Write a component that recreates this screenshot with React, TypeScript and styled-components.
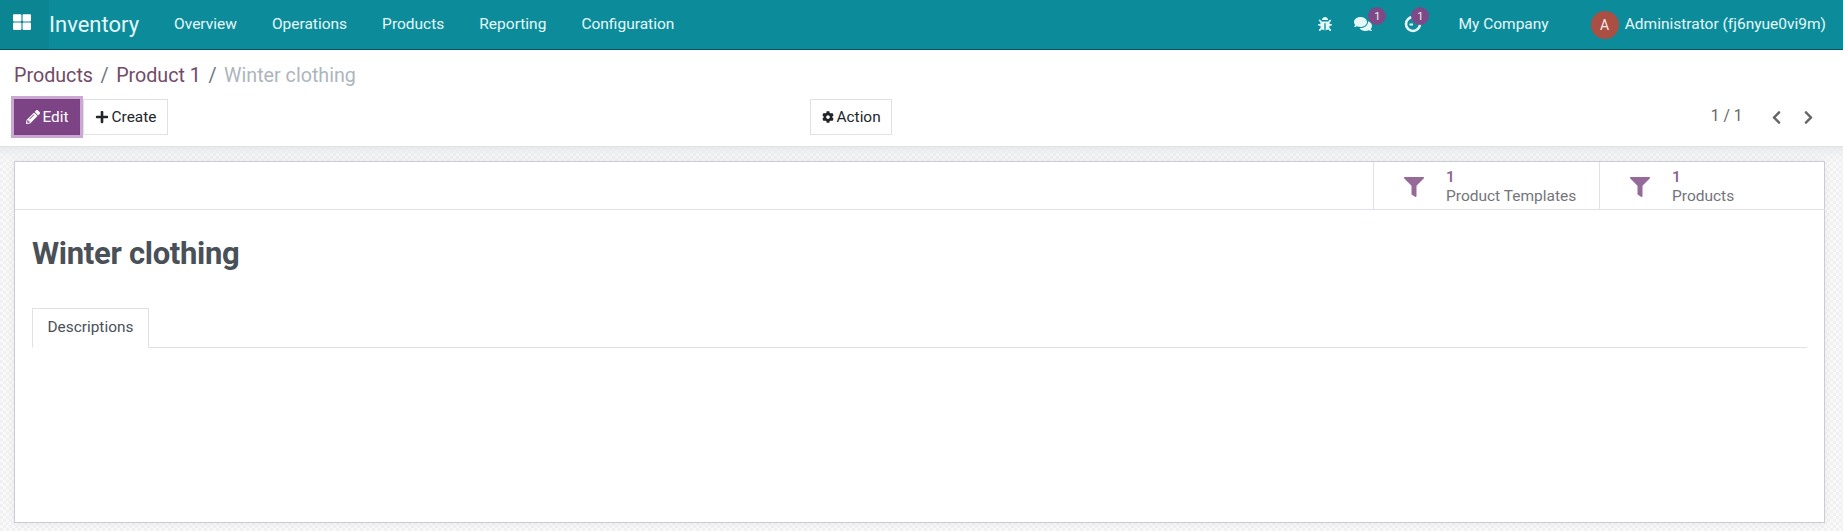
import React from "react";
import styled, { createGlobalStyle } from "styled-components";
import { FaThLarge, FaBug, FaComments, FaPencilAlt, FaPlus, FaCog, FaChevronLeft, FaChevronRight, FaFilter } from "react-icons/fa";

const Global = createGlobalStyle`
  html, body { margin: 0; padding: 0; height: 100%; background: #fff; }
  #root { height: 100%; }
  * { box-sizing: border-box; }
  body { font-family: Roboto, "Liberation Sans", sans-serif; overflow: hidden; }
`;

const Page = styled.div`
  width: 1843px;
  height: 531px;
  display: flex;
  flex-direction: column;
  overflow: hidden;
`;

const NavBar = styled.header`
  height: 50px;
  flex: none;
  background: #0c8c9b;
  border-bottom: 1px solid #06545d;
  display: flex;
  align-items: stretch;
  color: #e6f7f8;
`;

const AppsButton = styled.div`
  width: 49px;
  background: #0b8592;
  display: flex;
  align-items: center;
  justify-content: center;
  padding: 0 5px 6px 0;
  color: #fff;
  font-size: 18px;
`;

const Brand = styled.div`
  font-size: 22px;
  display: flex;
  align-items: center;
  margin-right: 35px;
  padding-bottom: 1px;
`;

const NavMenu = styled.nav`
  display: flex;
  align-items: center;
  gap: 35px;
  font-size: 15.5px;
  padding-bottom: 2px;
`;

const Spacer = styled.div`
  flex: 1;
`;

const Systray = styled.div`
  display: flex;
  align-items: center;
  padding-right: 17px;
  font-size: 15.5px;
`;

const TrayIcon = styled.span<{ $gap: number }>`
  position: relative;
  display: flex;
  margin-right: ${(p) => p.$gap}px;
  font-size: 14px;
  margin-top: -1px;
`;

const Badge = styled.span<{ $left: number }>`
  position: absolute;
  top: -8px;
  left: ${(p) => p.$left}px;
  width: 18px;
  height: 18px;
  border-radius: 50%;
  background: #7d4a87;
  color: #eee;
  font-size: 11px;
  display: flex;
  align-items: center;
  justify-content: center;
`;

const Company = styled.span`
  margin-right: 42px;
  padding-bottom: 2px;
`;

const Avatar = styled.span`
  width: 28px;
  height: 28px;
  border-radius: 50%;
  background: #a94f44;
  color: #fbe9e7;
  display: flex;
  align-items: center;
  justify-content: center;
  font-size: 14px;
  margin-right: 6px;
  margin-top: 1px;
`;

const UserName = styled.span`
  padding-bottom: 2px;
`;

const ControlPanel = styled.section`
  height: 97px;
  flex: none;
  background: #fff;
  border-bottom: 1px solid #dee2e6;
  padding: 13px 14px 0;
`;

const Breadcrumb = styled.div`
  display: flex;
  align-items: center;
  height: 24px;
  font-size: 19.7px;
  color: #714b67;
`;

const Separator = styled.span`
  color: #6c757d;
  margin: 0 7.5px;
`;

const Current = styled.span`
  color: #adb5bd;
`;

const ActionRow = styled.div`
  display: grid;
  grid-template-columns: 796px auto 1fr;
  align-items: center;
  margin-top: 12px;
  height: 36px;
`;

const Buttons = styled.div`
  display: flex;
  align-items: center;
  gap: 3px;
`;

const Button = styled.button<{ $primary?: boolean }>`
  display: inline-flex;
  align-items: center;
  justify-content: center;
  gap: 3px;
  height: 36px;
  padding: 0 10.5px;
  font-family: inherit;
  font-size: 15.4px;
  border-radius: 0;
  border: 1px solid ${(p) => (p.$primary ? "#7d3f87" : "#dee2e6")};
  background: ${(p) => (p.$primary ? "#7c4385" : "#fff")};
  color: ${(p) => (p.$primary ? "#fff" : "#212529")};
  box-shadow: ${(p) => (p.$primary ? "0 0 0 3px #c9a9cf" : "none")};
  svg { font-size: 14px; }
`;

const Pager = styled.div`
  display: flex;
  align-items: center;
  justify-content: flex-end;
  font-size: 15.6px;
  color: #666;
  padding-right: 13px;
  padding-bottom: 2px;
`;

const PagerArrows = styled.div`
  display: flex;
  gap: 17px;
  margin-left: 26.5px;
  font-size: 15px;
  color: #666;
  padding-top: 3px;
`;

const Content = styled.main`
  flex: 1;
  padding: 14px 18px 8px 14px;
  background-color: #f9f9f9;
  background-image:
    linear-gradient(45deg, #f1f1f1 25%, transparent 25%, transparent 75%, #f1f1f1 75%),
    linear-gradient(45deg, #f1f1f1 25%, transparent 25%, transparent 75%, #f1f1f1 75%);
  background-size: 6px 6px;
  background-position: 0 0, 3px 3px;
  box-shadow: inset 0 12px 12px -8px #e4e6e9;
  display: flex;
`;

const Sheet = styled.article`
  flex: 1;
  background: #fff;
  border: 1px solid #c9ccd2;
  box-shadow: 0 0 8px rgba(0, 0, 0, 0.06);
  display: flex;
  flex-direction: column;
`;

const StatBar = styled.div`
  height: 48px;
  flex: none;
  border-bottom: 1px solid #dee2e6;
  display: flex;
  justify-content: flex-end;
  margin-right: -1px;
`;

const StatButton = styled.div`
  width: 226px;
  display: flex;
  align-items: center;
  border-left: 1px solid #dee2e6;
  padding-left: 29.5px;
  gap: 22.5px;
  color: #956a99;
  svg { font-size: 20px; flex: none; margin-top: 2px; }
`;

const StatText = styled.div`
  display: flex;
  flex-direction: column;
  font-size: 15.5px;
  line-height: 19px;
  padding-top: 2px;
`;

const StatValue = styled.span`
  color: #8b5f8f;
  font-weight: 500;
`;

const StatLabel = styled.span`
  color: #74747a;
`;

const SheetBody = styled.div`
  padding: 0 17px;
  flex: 1;
`;

const Title = styled.h1`
  margin: 24px 0 0;
  font-size: 31px;
  line-height: 40px;
  font-weight: 700;
  color: #495057;
  letter-spacing: -0.3px;
`;

const Tabs = styled.div`
  margin-top: 34px;
  height: 40px;
  border-bottom: 1px solid #dee2e6;
  display: flex;
`;

const Tab = styled.div`
  height: 40px;
  padding: 0 14.5px 2px;
  border: 1px solid #dee2e6;
  border-bottom: 1px solid #fff;
  color: #495057;
  font-size: 15.4px;
  display: flex;
  align-items: center;
`;

const ClockIcon = () => (
  <svg width="18" height="18" viewBox="0 0 18 18" fill="none" stroke="currentColor" strokeWidth="2.6">
    <circle cx="9" cy="9" r="7" />
    <path d="M5.5 9.5H9" strokeWidth="2" />
  </svg>
);

export default function App() {
  return (
    <Page>
      <Global />
      <NavBar>
        <AppsButton><FaThLarge /></AppsButton>
        <Brand>Inventory</Brand>
        <NavMenu>
          <span>Overview</span>
          <span>Operations</span>
          <span>Products</span>
          <span>Reporting</span>
          <span>Configuration</span>
        </NavMenu>
        <Spacer />
        <Systray>
          <TrayIcon $gap={22}><FaBug /></TrayIcon>
          <TrayIcon $gap={32}><FaComments size={18} /><Badge $left={14}>1</Badge></TrayIcon>
          <TrayIcon $gap={36}><ClockIcon /><Badge $left={7}>1</Badge></TrayIcon>
          <Company>My Company</Company>
          <Avatar>A</Avatar>
          <UserName>Administrator (fj6nyue0vi9m)</UserName>
        </Systray>
      </NavBar>
      <ControlPanel>
        <Breadcrumb>
          <span>Products</span>
          <Separator>/</Separator>
          <span>Product 1</span>
          <Separator>/</Separator>
          <Current>Winter clothing</Current>
        </Breadcrumb>
        <ActionRow>
          <Buttons>
            <Button $primary><FaPencilAlt />Edit</Button>
            <Button><FaPlus />Create</Button>
          </Buttons>
          <Button><FaCog size={12} />Action</Button>
          <Pager>
            <span>1 / 1</span>
            <PagerArrows><FaChevronLeft /><FaChevronRight /></PagerArrows>
          </Pager>
        </ActionRow>
      </ControlPanel>
      <Content>
        <Sheet>
          <StatBar>
            <StatButton>
              <FaFilter />
              <StatText><StatValue>1</StatValue><StatLabel>Product Templates</StatLabel></StatText>
            </StatButton>
            <StatButton>
              <FaFilter />
              <StatText><StatValue>1</StatValue><StatLabel>Products</StatLabel></StatText>
            </StatButton>
          </StatBar>
          <SheetBody>
            <Title>Winter clothing</Title>
            <Tabs><Tab>Descriptions</Tab></Tabs>
          </SheetBody>
        </Sheet>
      </Content>
    </Page>
  );
}
